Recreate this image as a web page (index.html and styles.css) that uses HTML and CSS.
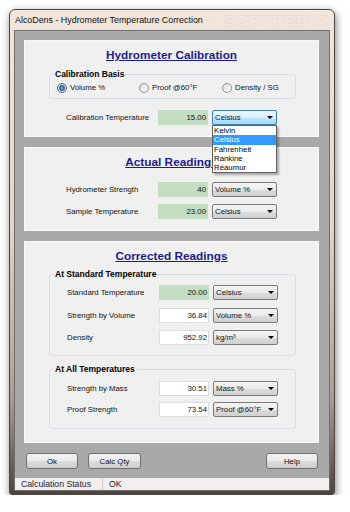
FILE: index.html
```html
<!DOCTYPE html>
<html lang="en">
<head>
  <meta charset="UTF-8" />
  <title>AlcoDens - Hydrometer Temperature Correction</title>
  <link rel="stylesheet" href="styles.css">
</head>
<body>

  <div class="window">
    <div class="titlebar">
      <span class="title">AlcoDens - Hydrometer Temperature Correction</span>
      <span class="mark">SOFTPEDIA</span>
    </div>

    <div class="client">
      <div class="content">

        <section class="panel panel-cal">
          <h2>Hydrometer Calibration</h2>
          <fieldset class="group basis">
            <legend>Calibration Basis</legend>
            <div class="radios">
              <label class="radio-item"><span class="radio on"></span>Volume %</label>
              <label class="radio-item"><span class="radio"></span>Proof @60°F</label>
              <label class="radio-item"><span class="radio"></span>Density / SG</label>
            </div>
          </fieldset>
          <div class="row cal-row">
            <span class="label">Calibration Temperature</span>
            <span class="field green">15.00</span>
            <div class="combo focus">
              <span>Celsius</span><span class="arrow"></span>
              <ul class="droplist">
                <li>Kelvin</li>
                <li class="selected">Celsius</li>
                <li>Fahrenheit</li>
                <li>Rankine</li>
                <li>Réaumur</li>
              </ul>
            </div>
          </div>
        </section>

        <section class="panel panel-act">
          <h2>Actual Readings</h2>
          <div class="row first">
            <span class="label">Hydrometer Strength</span>
            <span class="field green">40</span>
            <div class="combo"><span>Volume %</span><span class="arrow"></span></div>
          </div>
          <div class="row">
            <span class="label">Sample Temperature</span>
            <span class="field green">23.00</span>
            <div class="combo"><span>Celsius</span><span class="arrow"></span></div>
          </div>
        </section>

        <section class="panel panel-cor">
          <h2>Corrected Readings</h2>
          <fieldset class="group std">
            <legend>At Standard Temperature</legend>
            <div class="row">
              <span class="label">Standard Temperature</span>
              <span class="field green">20.00</span>
              <div class="combo"><span>Celsius</span><span class="arrow"></span></div>
            </div>
            <div class="row">
              <span class="label">Strength by Volume</span>
              <span class="field">36.84</span>
              <div class="combo"><span>Volume %</span><span class="arrow"></span></div>
            </div>
            <div class="row">
              <span class="label">Density</span>
              <span class="field">952.92</span>
              <div class="combo"><span>kg/m³</span><span class="arrow"></span></div>
            </div>
          </fieldset>
          <fieldset class="group all">
            <legend>At All Temperatures</legend>
            <div class="row">
              <span class="label">Strength by Mass</span>
              <span class="field">30.51</span>
              <div class="combo"><span>Mass %</span><span class="arrow"></span></div>
            </div>
            <div class="row">
              <span class="label">Proof Strength</span>
              <span class="field">73.54</span>
              <div class="combo"><span>Proof @60°F</span><span class="arrow"></span></div>
            </div>
          </fieldset>
        </section>

        <div class="buttons">
          <button class="btn">Ok</button>
          <button class="btn calc">Calc Qty</button>
          <button class="btn help">Help</button>
        </div>
      </div>

      <div class="statusbar">
        <span class="status-label">Calculation Status</span>
        <span class="status-value">OK</span>
      </div>
    </div>
  </div>

</body>
</html>
```

FILE: styles.css
```css
* {
  box-sizing: border-box;
}
body {
  margin: 0;
  background: #fff;
  font-family: "Liberation Sans", Arial, sans-serif;
  color: #111;
}

/* window frame */
.window {
  margin: 9px 0 0 9px;
  width: 326px;
  height: 486px;
  padding: 0 4px 3px 4px;
  border: 1px solid #4c4642;
  border-radius: 6px 6px 3px 3px;
  background: linear-gradient(180deg, #f1e5dc 0%, #e3d4ca 45%, #ab9d95 80%, #4d4440 100%);
  box-shadow: 1px 3px 9px rgba(0,0,0,0.5);
  display: flex;
  flex-direction: column;
}
.titlebar {
  height: 20px;
  display: flex;
  align-items: center;
  padding-left: 1px;
  font-size: 8.9px;
  color: #111;
  overflow: hidden;
}
.mark {
  margin-left: auto;
  margin-right: 2px;
  font-size: 15px;
  font-weight: bold;
  letter-spacing: 2px;
  color: rgba(255,255,255,0.45);
  text-shadow: 0 0 2px rgba(220,190,180,0.6);
}
.client {
  height: 461px;
  border: 1px solid #6e6e6e;
  background: #a9a9a9;
  display: flex;
  flex-direction: column;
}
.content {
  padding: 9px 10px 0 9px;
}

/* panels */
.panel {
  width: 295px;
  background: #f0f0f0;
  border: 1px solid #f8f8f8;
  padding-top: 7px;
}
.panel-cal {
  height: 97px;
}
.panel-act {
  height: 84px;
  margin-top: 10px;
}
.panel-cor {
  height: 202px;
  margin-top: 10px;
}
.panel h2 {
  margin: 0;
  text-align: center;
  font-size: 11.8px;
  line-height: 14px;
  font-weight: bold;
  color: #1c1c8e;
  text-decoration: underline;
}

/* group boxes */
.group {
  margin: 7px 22px 0 24px;
  min-width: 0;
  border: 1px solid #d5dfe5;
  border-radius: 3px;
  padding: 4px 0 5px 4px;
}
.group legend {
  padding: 0 1px;
  font-size: 8.5px;
  line-height: 10px;
  font-weight: bold;
  color: #000;
}
.radios {
  margin-left: 3px;
  height: 10px;
  display: grid;
  grid-template-columns: 82px 83px auto;
  font-size: 7.8px;
  line-height: 10px;
}
.radio-item {
  display: flex;
  align-items: center;
  gap: 3px;
}
.radio {
  flex: none;
  width: 10px;
  height: 10px;
  border-radius: 50%;
  border: 1px solid #8e8f8f;
  background: linear-gradient(135deg, #dedede, #fbfbfb);
}
.radio.on {
  border-color: #5a6b7c;
  background: radial-gradient(circle, #7fb0de 0, #2c5f98 2.4px, #cdd9e4 3.4px, #f4f4f4 5px);
}

/* rows of fields */
.row {
  display: flex;
  align-items: center;
  height: 15px;
  padding-left: 41px;
  font-size: 7.8px;
}
.cal-row {
  margin-top: 11px;
}
.panel-act .row {
  margin-top: 7px;
}
.panel-act .row.first {
  margin-top: 13px;
}
.group .row {
  padding-left: 13px;
}
.std {
  margin-top: 6px;
  padding: 6px 0 10px 4px;
}
.std .row + .row {
  margin-top: 7.5px;
}
.all {
  margin-top: 8px;
  padding: 6.5px 0 11px 4px;
}
.all .row + .row {
  margin-top: 6px;
}
.label {
  width: 92px;
  flex: none;
}
.field {
  width: 50px;
  height: 15px;
  margin-right: 4px;
  border: 1px solid #dedede;
  background: #fff;
  text-align: right;
  padding-right: 1px;
  line-height: 13px;
  color: #111;
}
.field.green {
  background: #c2ddc2;
  border-color: #c2ddc2;
}

/* combo boxes */
.combo {
  position: relative;
  width: 65px;
  height: 15px;
  border: 1px solid #7a7a7a;
  border-radius: 2px;
  background: linear-gradient(#f4f4f4 0%, #ebebeb 50%, #dddddd 51%, #d0d0d0 100%);
  padding: 0 3px 0 2px;
  display: flex;
  align-items: center;
  justify-content: space-between;
  line-height: 13px;
  color: #111;
  white-space: nowrap;
}
.combo.focus {
  border-color: #3c7fb1;
  background: linear-gradient(#eaf6fd 0%, #d9f0fc 50%, #bee6fd 51%, #a7d9f5 100%);
}
.arrow {
  flex: none;
  width: 0;
  height: 0;
  border-left: 3px solid transparent;
  border-right: 3px solid transparent;
  border-top: 3px solid #000;
}
.droplist {
  position: absolute;
  top: 14px;
  left: -1px;
  width: 65px;
  margin: 0;
  padding: 0;
  list-style: none;
  background: #fff;
  border: 1px solid #646464;
  box-shadow: 2px 2px 2px rgba(0,0,0,0.3);
  z-index: 5;
}
.droplist li {
  height: 9.3px;
  line-height: 9.3px;
  padding-left: 1px;
  font-size: 7.8px;
  color: #000;
}
.droplist li.selected {
  background: #3399ff;
  color: #fff;
}

/* buttons */
.buttons {
  display: flex;
  margin-top: 10px;
  padding: 0 1px 0 2px;
}
.btn {
  width: 52px;
  height: 16px;
  padding: 0;
  border: 1px solid #707070;
  border-radius: 3px;
  background: linear-gradient(#f2f2f2 0%, #ebebeb 50%, #dddddd 51%, #cfcfcf 100%);
  font-family: "Liberation Sans", Arial, sans-serif;
  font-size: 7.8px;
  color: #111;
}
.btn.calc {
  width: 53px;
  margin-left: 10px;
}
.btn.help {
  margin-left: auto;
}

/* status bar */
.statusbar {
  flex: 1;
  margin-top: 9px;
  background: #f1eeed;
  display: flex;
  align-items: center;
  font-size: 8.7px;
  color: #1b2333;
}
.status-label {
  width: 88px;
  padding-left: 6px;
  border-right: 1px solid #d3cdcb;
  line-height: 12px;
}
.status-value {
  padding-left: 6px;
}
```
